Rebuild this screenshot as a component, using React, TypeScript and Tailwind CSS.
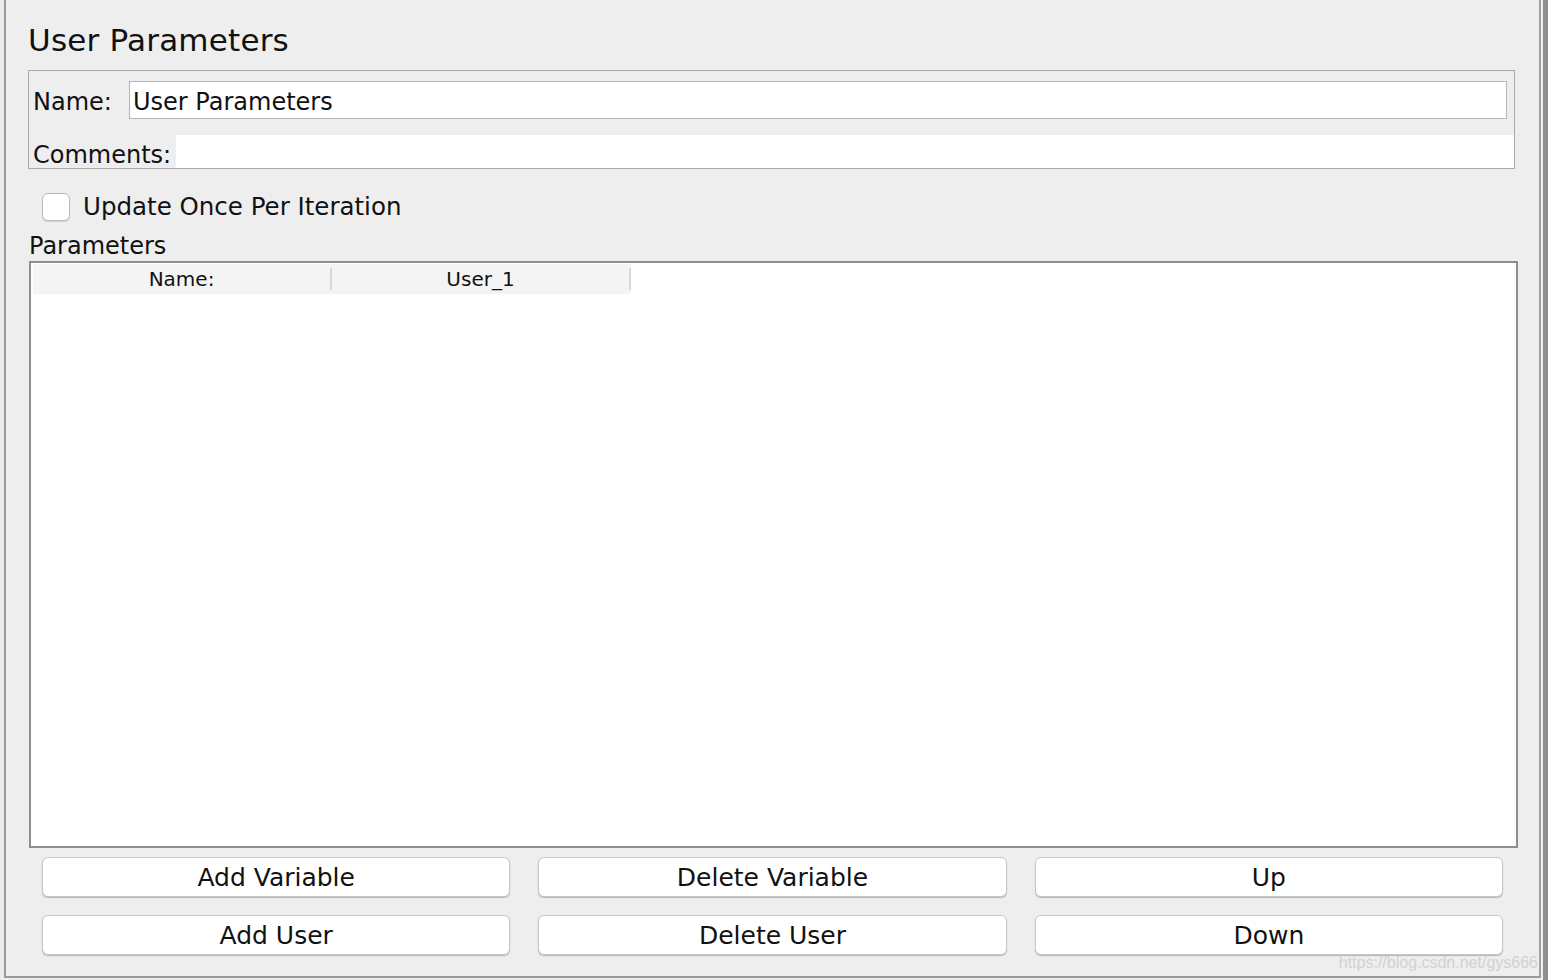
const font = { fontFamily: '"DejaVu Sans", "Liberation Sans", sans-serif' };

function Button({ label }: { label: string }) {
  return (
    <button className="h-[40px] rounded-[6px] border border-[#c8c8c8] bg-white text-[25px] text-[#111] shadow-[0_1px_1px_rgba(0,0,0,0.25)] leading-none">
      {label}
    </button>
  );
}

export default function App() {
  return (
    <div className="flex h-[980px] w-[1548px] bg-[#eeeeee] text-[#111]" style={font}>
      <div className="w-[4px] bg-[#ececec]" />
      <div className="relative flex h-[978px] flex-1 flex-col border-x-2 border-b-2 border-l-[#9a9a9a] border-r-[#a0a0a0] border-b-[#9a9a9a] bg-[#eeeeee]">
        <div className="shrink-0 pl-[22px] pt-[18px]">
          <h1 className="h-[44px] text-[31px] leading-[44px] tracking-[0.2px]">User Parameters</h1>
        </div>

        <div className="ml-[22px] mt-[8px] mr-[24px] flex h-[99px] shrink-0 flex-col border border-[#a9a9a9] bg-[#eeeeee]">
          <div className="flex h-[48px] items-end">
            <span className="w-[100px] translate-y-[2px] pl-[4px] text-[24px] leading-[38px]">Name:</span>
            <div className="mr-[7px] flex h-[38px] flex-1 items-center border border-[#b4b4b4] bg-white pl-[3px] text-[24px]">
              <span className="translate-y-[2px]">User Parameters</span>
            </div>
          </div>
          <div className="mt-[16px] flex flex-1 items-center">
            <span className="w-[147px] translate-y-[3px] pl-[4px] text-[24px] leading-[32px]">Comments:</span>
            <div className="h-full flex-1 bg-white" />
          </div>
        </div>

        <div className="ml-[36px] mt-[24px] flex shrink-0 items-center gap-[13px]">
          <div className="h-[28px] w-[28px] rounded-[6px] border border-[#b9b9b9] bg-white shadow-[0_1px_1px_rgba(0,0,0,0.12)]" />
          <span className="text-[24.5px] leading-[28px]">Update Once Per Iteration</span>
        </div>

        <div className="ml-[23px] mt-[10px] h-[30px] shrink-0 text-[24px] leading-[30px]">Parameters</div>

        <div className="ml-[23px] mr-[21px] h-[587px] shrink-0 border-2 border-[#8e8e8e] bg-white pt-[1px] pl-[2px]">
          <div className="flex h-[30px] w-[598px] bg-[#f4f4f4] text-[20px]">
            <div className="flex w-[298px] items-center justify-center">Name:</div>
            <div className="my-[4px] w-[2px] bg-[#d8d8d8]" />
            <div className="flex w-[298px] items-center justify-center">User_1</div>
            <div className="my-[4px] w-[2px] bg-[#d8d8d8]" />
          </div>
        </div>

        <div className="ml-[36px] mr-[36px] mt-[9px] grid shrink-0 grid-cols-3 gap-x-[28px] gap-y-[18px]">
          <Button label="Add Variable" />
          <Button label="Delete Variable" />
          <Button label="Up" />
          <Button label="Add User" />
          <Button label="Delete User" />
          <Button label="Down" />
        </div>

        <span
          className="absolute bottom-[3px] right-[1px] text-[16px] leading-[20px] text-[#d2d2d2]"
          style={{ fontFamily: '"Liberation Sans", sans-serif' }}
        >
          https://blog.csdn.net/gys666
        </span>
      </div>
      <div className="flex w-[7px]">
        <div className="w-[2px] bg-[#f0f0f0]" />
        <div className="flex-1 bg-[#8f8f8f]" />
      </div>
    </div>
  );
}
